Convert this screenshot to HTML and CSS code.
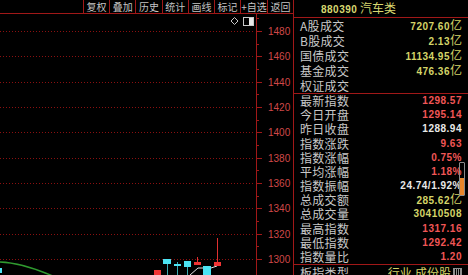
FILE: index.html
```html
<!DOCTYPE html>
<html>

<head>
    <title>880390 汽车类</title>
    <meta charset="UTF-8">

    <link rel="stylesheet" href="styles.css">

</head>

<body>
    <div class="screen">
        <div class="left">
            <div class="toolbar">
                <div class="tb-btns">
                    <span class="tb-btn">复权</span>
                    <span class="tb-btn">叠加</span>
                    <span class="tb-btn">历史</span>
                    <span class="tb-btn">统计</span>
                    <span class="tb-btn">画线</span>
                    <span class="tb-btn">标记</span>
                    <span class="tb-btn">+自选</span>
                    <span class="tb-btn">返回</span>
                </div>
            </div>

            <!-- K line chart with price axis -->
            <svg class="chart" width="293" height="261" viewBox="0 0 293 261">
                <g class="grid">
                    <line x1="0" y1="17.5" x2="255" y2="17.5" />
                    <line x1="0" y1="42.5" x2="255" y2="42.5" />
                    <line x1="0" y1="68.5" x2="255" y2="68.5" />
                    <line x1="0" y1="93.5" x2="255" y2="93.5" />
                    <line x1="0" y1="118.5" x2="255" y2="118.5" />
                    <line x1="0" y1="144.5" x2="255" y2="144.5" />
                    <line x1="0" y1="169.5" x2="255" y2="169.5" />
                    <line x1="0" y1="194.5" x2="255" y2="194.5" />
                    <line x1="0" y1="220.5" x2="255" y2="220.5" />
                    <line x1="0" y1="245.5" x2="255" y2="245.5" />
                </g>
                <g class="axis">
                    <line x1="256.5" y1="0" x2="256.5" y2="261" />
                    <line x1="256" y1="17.5" x2="262" y2="17.5" />
                    <line x1="256" y1="42.5" x2="262" y2="42.5" />
                    <line x1="256" y1="68.5" x2="262" y2="68.5" />
                    <line x1="256" y1="93.5" x2="262" y2="93.5" />
                    <line x1="256" y1="118.5" x2="262" y2="118.5" />
                    <line x1="256" y1="144.5" x2="262" y2="144.5" />
                    <line x1="256" y1="169.5" x2="262" y2="169.5" />
                    <line x1="256" y1="194.5" x2="262" y2="194.5" />
                    <line x1="256" y1="220.5" x2="262" y2="220.5" />
                    <line x1="256" y1="245.5" x2="262" y2="245.5" />
                    <line x1="256" y1="4.5" x2="259" y2="4.5" />
                    <line x1="256" y1="30.5" x2="259" y2="30.5" />
                    <line x1="256" y1="55.5" x2="259" y2="55.5" />
                    <line x1="256" y1="80.5" x2="259" y2="80.5" />
                    <line x1="256" y1="106.5" x2="259" y2="106.5" />
                    <line x1="256" y1="131.5" x2="259" y2="131.5" />
                    <line x1="256" y1="156.5" x2="259" y2="156.5" />
                    <line x1="256" y1="182.5" x2="259" y2="182.5" />
                    <line x1="256" y1="207.5" x2="259" y2="207.5" />
                    <line x1="256" y1="232.5" x2="259" y2="232.5" />
                </g>
                <g class="axis-labels">
                    <text x="268" y="21">1480</text>
                    <text x="268" y="46">1460</text>
                    <text x="268" y="72">1440</text>
                    <text x="268" y="97">1420</text>
                    <text x="268" y="122">1400</text>
                    <text x="268" y="148">1380</text>
                    <text x="268" y="173">1360</text>
                    <text x="268" y="198">1340</text>
                    <text x="268" y="224">1320</text>
                    <text x="268" y="249">1300</text>
                </g>

                <!-- chart tool icons -->
                <polygon class="ico" points="234.5,3.5 238,7 234.5,10.5 231,7" />
                <rect class="ico" x="243.5" y="3.5" width="10" height="8" />
                <rect class="ico-fill" x="249" y="4" width="4" height="7" />

                <!-- moving average -->
                <path class="ma-green" d="M0 248 C 15 248.5, 30 252, 55 263" />
                <rect class="up" x="0" y="254" width="2" height="5" />
                <polyline class="ma-white" points="190,261 198,254 211,254 217,252" />

                <!-- candles -->
                <rect class="down" x="154" y="256" width="7" height="6" />
                <line class="wick-up" x1="167.5" y1="250" x2="167.5" y2="261" />
                <rect class="up" x="163" y="245" width="8" height="5" />
                <line class="wick-up" x1="177.5" y1="248" x2="177.5" y2="261" />
                <rect class="up" x="174" y="250" width="7" height="2" />
                <line class="wick-up" x1="187.5" y1="253" x2="187.5" y2="261" />
                <rect class="up" x="184" y="247" width="7" height="6" />
                <line class="wick-down" x1="197.5" y1="243" x2="197.5" y2="248" />
                <rect class="down" x="194" y="248" width="7" height="3" />
                <rect class="up" x="203" y="252" width="8" height="9" />
                <line class="wick-down" x1="217.5" y1="224" x2="217.5" y2="248" />
                <rect class="down" x="214" y="248" width="7" height="4" />
            </svg>
        </div>

        <div class="panel">
            <div class="panel-head"><span class="code">880390</span> 汽车类</div>

            <div class="sec sec-trade">
                <div class="row"><span class="k">A股成交</span><span class="v yel">7207.60<i>亿</i></span></div>
                <div class="row"><span class="k">B股成交</span><span class="v yel">2.13<i>亿</i></span></div>
                <div class="row"><span class="k">国债成交</span><span class="v yel">11134.95<i>亿</i></span></div>
                <div class="row"><span class="k">基金成交</span><span class="v yel">476.36<i>亿</i></span></div>
                <div class="row"><span class="k">权证成交</span><span class="v"></span></div>
            </div>

            <div class="sec sec-index">
                <div class="row"><span class="k">最新指数</span><span class="v red">1298.57</span></div>
                <div class="row"><span class="k">今日开盘</span><span class="v red">1295.14</span></div>
                <div class="row"><span class="k">昨日收盘</span><span class="v wht">1288.94</span></div>
                <div class="row"><span class="k">指数涨跌</span><span class="v red">9.63</span></div>
                <div class="row"><span class="k">指数涨幅</span><span class="v red">0.75%</span></div>
                <div class="row"><span class="k">平均涨幅</span><span class="v red">1.18%</span></div>
                <div class="row"><span class="k">指数振幅</span><span class="v wht">24.74/1.92%</span></div>
                <div class="row"><span class="k">总成交额</span><span class="v yel">285.62<i>亿</i></span></div>
                <div class="row"><span class="k">总成交量</span><span class="v yel">30410508</span></div>
                <div class="row"><span class="k">最高指数</span><span class="v red">1317.16</span></div>
                <div class="row"><span class="k">最低指数</span><span class="v red">1292.42</span></div>
                <div class="row"><span class="k">指数量比</span><span class="v red">1.20</span></div>
            </div>

            <div class="sec sec-type">
                <div class="row"><span class="k">板指类型</span><span class="v yel cjk">行业,成份股<span class="grid-ico"></span></span></div>
            </div>

            <div class="scroll"><div class="scroll-thumb"></div></div>
        </div>
    </div>
</body>

</html>
```

FILE: styles.css
```css
body {
    margin: 0;
    background: #000;
    font-family: "Noto Sans CJK SC", sans-serif;
}

.screen {
    display: flex;
    width: 468px;
    height: 275px;
    overflow: hidden;
    background: #000;
}

.left {
    width: 293px;
    flex-shrink: 0;
    display: flex;
    flex-direction: column;
}

/* toolbar */
.toolbar {
    height: 13px;
    flex-shrink: 0;
    border-bottom: 1px solid #a01818;
    display: flex;
    justify-content: flex-end;
}

.tb-btns {
    width: 210px;
    display: flex;
}

.tb-btn {
    flex: 1;
    border-left: 1px solid #a01818;
    color: #c4c4c4;
    font-size: 10px;
    line-height: 13px;
    text-align: center;
    white-space: nowrap;
}

/* chart */
.chart {
    display: block;
}

.grid line {
    stroke: #8a1010;
    stroke-width: 1;
    stroke-dasharray: 1 2;
}

.axis line {
    stroke: #a01818;
    stroke-width: 1;
}

.axis-labels text {
    font-family: "Liberation Sans", sans-serif;
    font-size: 10px;
    fill: #d04848;
}

.ico {
    fill: none;
    stroke: #c8c8c8;
    stroke-width: 1;
}

.ico-fill {
    fill: #e8e8e8;
}

.ma-green {
    fill: none;
    stroke: #2f9a2f;
    stroke-width: 1.5;
}

.ma-white {
    fill: none;
    stroke: #e0e0e0;
    stroke-width: 1;
}

.up {
    fill: #4ce4f4;
}

.down {
    fill: #f03434;
}

.wick-up {
    stroke: #3aa8b0;
    stroke-width: 1;
}

.wick-down {
    stroke: #e03030;
    stroke-width: 1;
}

/* right info panel */
.panel {
    position: relative;
    width: 174px;
    border-left: 1px solid #a01818;
    display: flex;
    flex-direction: column;
}

.panel-head {
    height: 17px;
    flex-shrink: 0;
    border-bottom: 1px solid #a01818;
    padding-left: 27px;
    color: #d8d870;
    font-size: 12px;
    line-height: 16px;
    white-space: nowrap;
}

.panel-head .code {
    font-family: "Liberation Sans", sans-serif;
    font-weight: bold;
    font-size: 10px;
    letter-spacing: 0.5px;
}

.sec {
    flex-shrink: 0;
    display: flex;
    flex-direction: column;
    border-bottom: 1px solid #a01818;
}

.sec-trade {
    height: 75px;
}

.sec-index {
    height: 170px;
}

.sec-type {
    height: 15px;
}

.row {
    flex: 1;
    min-height: 0;
    display: flex;
    justify-content: space-between;
    align-items: center;
    padding: 0 6px 0 6px;
    line-height: 14px;
    white-space: nowrap;
}

.k {
    color: #c8c8c8;
    font-size: 12px;
    letter-spacing: 0.3px;
}

.v {
    font-family: "Liberation Sans", "Noto Sans CJK SC", sans-serif;
    font-weight: bold;
    font-size: 10px;
    letter-spacing: 0.5px;
}

.v i {
    font-style: normal;
    font-weight: normal;
    font-family: "Noto Sans CJK SC", sans-serif;
    font-size: 12px;
    letter-spacing: 0;
}

.v.cjk {
    font-family: "Noto Sans CJK SC", sans-serif;
    font-weight: normal;
    font-size: 12px;
    letter-spacing: 0;
    display: flex;
    align-items: center;
}

.yel {
    color: #d4d468;
}

.red {
    color: #f05656;
}

.wht {
    color: #e8e8e8;
}

.grid-ico {
    display: inline-block;
    width: 7px;
    height: 7px;
    margin-left: 2px;
    border: 1px solid #909090;
    background: repeating-linear-gradient(90deg, #909090 0 1px, transparent 1px 2px);
}

.scroll {
    position: absolute;
    right: 3px;
    top: 162px;
    width: 4px;
    height: 32px;
    border: 1px solid #8a8a8a;
    border-radius: 1px;
    display: flex;
    flex-direction: column;
    justify-content: flex-end;
}

.scroll-thumb {
    height: 17px;
    background: #e8862a;
}
```
